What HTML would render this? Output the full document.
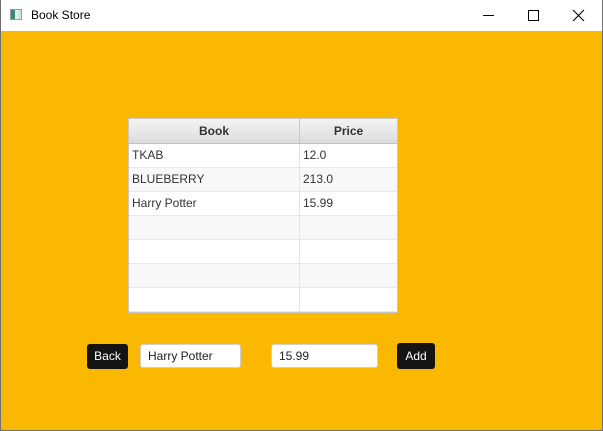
<!DOCTYPE html>
<html><head><style>
*{margin:0;padding:0;box-sizing:border-box}
body{width:603px;height:431px;overflow:hidden;background:#fbb800;font-family:"Liberation Sans",sans-serif;position:relative}
.frame{position:absolute;left:0;top:0;width:603px;height:431px;border:1px solid #707070;border-top:none}
.tb{position:absolute;left:0;top:0;width:603px;height:31px;background:#fff}
.tb .t{position:absolute;left:31px;top:8px;font-size:12px;color:#000}
.ico{position:absolute;left:10px;top:9px;width:12px;height:11px;border:1px solid #999;background:linear-gradient(90deg,#3a8a7a 0 40%,#cfe 40% 70%,#ddd 70%)}
.tbl{position:absolute;left:128px;top:118px;width:270px;height:195px;background:#fff;border:1px solid #c8c8c8;overflow:hidden}
.hd{height:25px;background:linear-gradient(#f4f4f4,#dcdcdc);border-bottom:1px solid #c0c0c0;display:flex;font-weight:bold;font-size:12px;color:#333}
.hd div{line-height:24px;text-align:center}
.row{height:24px;display:flex;border-bottom:1px solid #e8e8e8;font-size:12px;color:#333}
.row div{line-height:23px;padding-left:3px}
.c1{width:171px;border-right:1px solid #e3e3e3}
.c2{flex:1}
.hd .c1{border-right:1px solid #c8c8c8}
.btn{position:absolute;background:#141414;color:#fff;font-size:12px;border-radius:3px;text-align:center;line-height:25px;height:25px}
.in{position:absolute;background:#fff;border:1px solid #cfcfcf;border-radius:3px;font-size:12px;color:#222;line-height:22px;padding-left:7px;height:24px}
</style></head><body>
<div class="tb"><div class="ico"></div><div class="t">Book Store</div>
<svg style="position:absolute;left:470px;top:8px" width="125" height="16"><line x1="13" y1="7.5" x2="24" y2="7.5" stroke="#000"/><rect x="58.5" y="2.5" width="10" height="10" fill="none" stroke="#000"/><path d="M103 2 L114 13 M114 2 L103 13" stroke="#000" stroke-width="1.1"/></svg></div>
<div class="tbl">
<div class="hd"><div class="c1">Book</div><div class="c2">Price</div></div>
<div>
<div class="row" style="background:#fff"><div class="c1">TKAB</div><div class="c2">12.0</div></div>
<div class="row" style="background:#f8f8f8"><div class="c1">BLUEBERRY</div><div class="c2">213.0</div></div>
<div class="row" style="background:#fff"><div class="c1">Harry Potter</div><div class="c2">15.99</div></div>
<div class="row" style="background:#f8f8f8"><div class="c1"></div><div class="c2"></div></div>
<div class="row" style="background:#fff"><div class="c1"></div><div class="c2"></div></div>
<div class="row" style="background:#f8f8f8"><div class="c1"></div><div class="c2"></div></div>
<div class="row" style="background:#fff"><div class="c1"></div><div class="c2"></div></div>
<div class="row" style="background:#f8f8f8"><div class="c1"></div><div class="c2"></div></div>
</div></div>
<div class="btn" style="left:87px;top:344px;width:41px">Back</div>
<div class="in" style="left:140px;top:344px;width:101px">Harry Potter</div>
<div class="in" style="left:271px;top:344px;width:107px">15.99</div>
<div class="btn" style="left:397px;top:343px;width:38px;height:26px;line-height:26px">Add</div>
<div class="frame"></div>
</body></html>
